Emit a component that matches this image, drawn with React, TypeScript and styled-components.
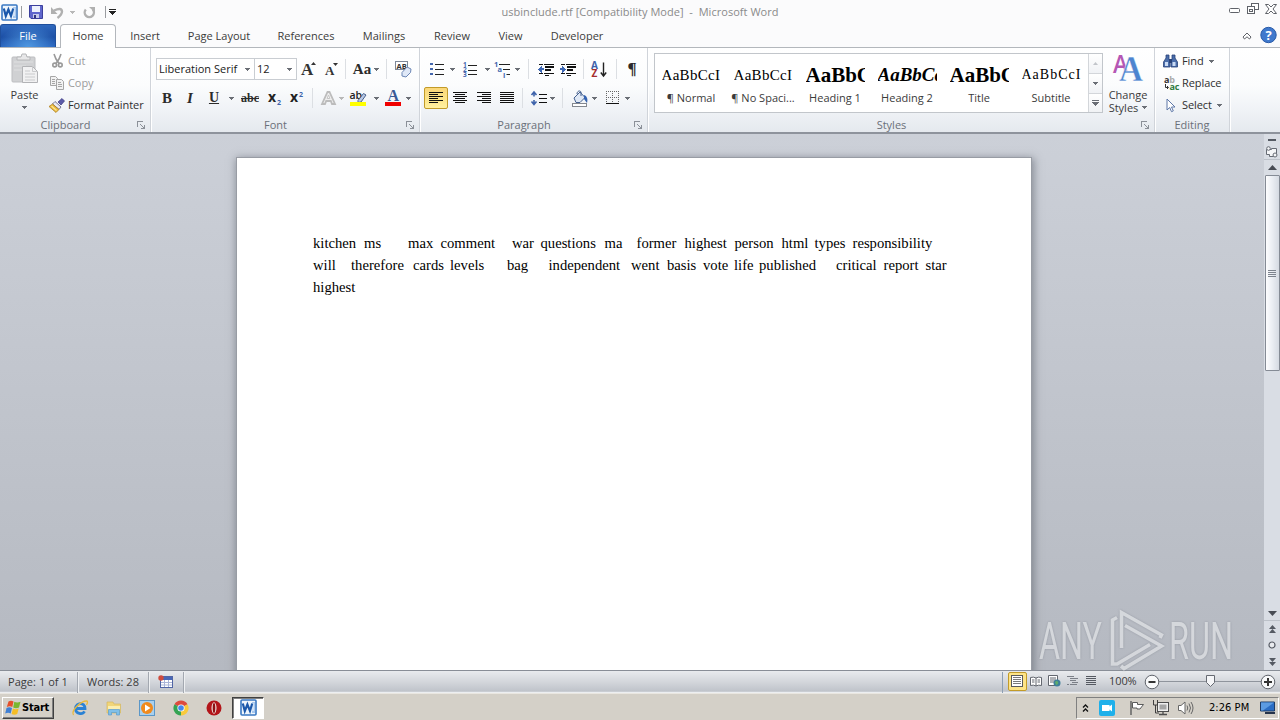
import React from "react";
import styled, { createGlobalStyle, css } from "styled-components";

const GlobalStyle = createGlobalStyle`
  * {
    box-sizing: border-box;
  }
  body {
    margin: 0;
    overflow: hidden;
  }
  svg {
    display: block;
    flex: none;
    overflow: visible;
  }
`;

const Window = styled.div`
  position: relative;
  display: flex;
  flex-direction: column;
  width: 1280px;
  height: 720px;
  overflow: hidden;
  font-family: "Open Sans", "Noto Sans", sans-serif;
  font-size: 11px;
  line-height: 14px;
  color: #3b3b3b;
  background-color: #fbfbfc;
  white-space: nowrap;
`;

/* title bar */
const TitleBar = styled.header`
  display: grid;
  grid-template-columns: 120px 1fr 120px;
  height: 24px;
`;
const QuickAccess = styled.div`
  display: flex;
  align-items: center;
  padding-left: 1px;
`;
const Title = styled.div`
  padding: 5px 0 0 0;
  text-align: center;
  color: #8a8a8a;
  white-space: pre;
  letter-spacing: 0.03px;
`;
const WindowButtons = styled.div`
  display: flex;
  justify-content: flex-end;
  gap: 6px;
  padding: 3px 3px 0 0;
`;

/* tabs */
const TabRow = styled.nav`
  display: flex;
  height: 24px;
  border-bottom: 1px solid #b3b7bc;
`;
const FileTab = styled.div`
  width: 56px;
  margin-right: 4px;
  padding-top: 4px;
  text-align: center;
  color: #fff;
  border: 1px solid #1f4f9c;
  border-bottom: none;
  border-radius: 3px 3px 0 0;
  background: radial-gradient(ellipse at 50% 100%, #4f97e0 0%, rgba(60, 125, 210, 0) 75%),
    linear-gradient(#2f68bd, #1d50a6 55%, #2a66c0);
`;
const Tab = styled.div<{ $width: number; $active?: boolean }>`
  width: ${(props) => props.$width}px;
  padding-top: 5px;
  text-align: center;
  ${(props) =>
    props.$active &&
    css`
      height: 24px;
      padding-top: 4px;
      border: 1px solid #b3b7bc;
      border-bottom: none;
      border-radius: 4px 4px 0 0;
      background-color: #fff;
    `}
`;
const TabTools = styled.div`
  display: flex;
  align-items: center;
  gap: 8px;
  margin-left: auto;
  padding-right: 3px;
`;

/* ribbon */
const Ribbon = styled.section`
  display: flex;
  height: 86px;
  background: linear-gradient(#ffffff 0%, #fbfcfd 45%, #eff2f6 75%, #e5e9ee 100%);
  border-bottom: 2px solid #8e939c;
`;
const Group = styled.div<{ $width: number }>`
  display: flex;
  flex-direction: column;
  width: ${(props) => props.$width}px;
  border-right: 1px solid #d0d4da;
  box-shadow: 1px 0 0 #fff;
`;
const GroupBody = styled.div`
  display: flex;
  height: 70px;
`;
const GroupFooter = styled.div`
  display: flex;
  align-items: center;
  height: 14px;
  color: #6b7079;
`;
const GroupLabel = styled.span`
  flex: 1;
  text-align: center;
`;
const LauncherCell = styled.div`
  display: flex;
  width: 19px;
  padding-left: 6px;
`;
const ToolRows = styled.div<{ $left?: number }>`
  display: flex;
  flex-direction: column;
  gap: 7px;
  padding: 10px 0 0 ${(props) => props.$left ?? 4}px;
`;
const ToolRow = styled.div`
  display: flex;
  height: 22px;
`;
const Cell = styled.div<{ $width: number; $pressed?: boolean }>`
  display: flex;
  align-items: center;
  justify-content: center;
  width: ${(props) => props.$width}px;
  height: 22px;
  ${(props) =>
    props.$pressed &&
    css`
      border: 1px solid #c29b29;
      border-radius: 2px;
      background: linear-gradient(#fbd779, #fde68c 60%, #fff0a0);
    `}
`;
const Divider = styled.i`
  width: 1px;
  height: 20px;
  background-color: #dcdfe3;
`;
const TitleDivider = styled.i`
  width: 1px;
  height: 12px;
  background-color: #9a9ca0;
`;
const Combo = styled.div<{ $width: number }>`
  display: flex;
  align-items: center;
  justify-content: space-between;
  width: ${(props) => props.$width}px;
  height: 22px;
  margin-right: -1px;
  padding: 0 4px 0 2px;
  color: #1a1a1a;
  border: 1px solid #c9cdd2;
  background-color: #fff;
`;
const Glyph = styled.span<{ $size: number; $bold?: boolean; $italic?: boolean; $line?: string }>`
  font-family: "Liberation Serif", serif;
  font-size: ${(props) => props.$size}px;
  font-weight: ${(props) => (props.$bold ? 700 : 400)};
  font-style: ${(props) => (props.$italic ? "italic" : "normal")};
  text-decoration: ${(props) => props.$line ?? "none"};
  color: #2b2b2b;
`;
const BigButton = styled.div<{ $width: number }>`
  display: flex;
  flex-direction: column;
  align-items: center;
  width: ${(props) => props.$width}px;
  padding-top: 5px;
`;
const BigLabel = styled.span<{ $gap?: number }>`
  display: flex;
  align-items: center;
  gap: 4px;
  height: 13px;
  margin-top: ${(props) => props.$gap ?? 0}px;
`;
const CommandList = styled.div`
  display: flex;
  flex-direction: column;
  padding-top: 2px;
`;
const Command = styled.div<{ $disabled?: boolean }>`
  display: grid;
  grid-template-columns: 19px auto auto;
  align-items: center;
  justify-content: start;
  height: 22px;
  letter-spacing: -0.08px;
  color: ${(props) => (props.$disabled ? "#9b9b9b" : "#2f2f2f")};
`;
const CommandText = styled.span`
  margin-right: 5px;
`;

/* style gallery */
const Gallery = styled.div`
  display: flex;
  width: 449px;
  height: 60px;
  margin: 5px 0 0 6px;
  border: 1px solid #c2c6cb;
  background-color: #fff;
`;
const StyleItem = styled.div`
  display: flex;
  flex-direction: column;
  align-items: center;
  width: 72px;
  padding-top: 10px;
`;
const Preview = styled.div<{ $size: number; $bold?: boolean; $italic?: boolean; $spacing?: number }>`
  width: 59px;
  height: 22px;
  overflow: hidden;
  font-family: "Liberation Serif", serif;
  font-size: ${(props) => props.$size}px;
  line-height: 22px;
  font-weight: ${(props) => (props.$bold ? 700 : 400)};
  font-style: ${(props) => (props.$italic ? "italic" : "normal")};
  letter-spacing: ${(props) => props.$spacing ?? 0}px;
  color: #000;
`;
const StyleName = styled.span`
  margin-top: 5px;
`;
const GalleryScroll = styled.div`
  display: flex;
  flex-direction: column;
  width: 14px;
  margin-left: auto;
`;
const GalleryButton = styled.div<{ $height: number }>`
  display: flex;
  align-items: center;
  justify-content: center;
  height: ${(props) => props.$height}px;
  border-left: 1px solid #d3d6da;
  border-bottom: 1px solid #d3d6da;
  background: linear-gradient(#fff, #f0f2f5);
  &:last-child {
    border-bottom: none;
  }
`;

/* document */
const Workspace = styled.main`
  display: flex;
  height: 536px;
`;
const Canvas = styled.div`
  flex: 1;
  padding: 24px 0 0 237px;
  overflow: hidden;
  background: linear-gradient(#ccd0d8, #b5b9c1);
`;
const Page = styled.article`
  width: 794px;
  height: 600px;
  padding: 74px 0 0 76px;
  background-color: #fff;
  box-shadow: 0 0 0 1px #989ca4, 1px 2px 8px 2px rgba(70, 75, 85, 0.5);
`;
const Line = styled.p`
  display: flex;
  height: 22px;
  margin: 0;
  font-family: "Liberation Serif", serif;
  font-size: 14.67px;
  line-height: 22px;
  color: #000;
`;
const Word = styled.span<{ $advance: number }>`
  width: ${(props) => props.$advance}px;
`;
const ScrollBar = styled.aside`
  display: flex;
  flex-direction: column;
  align-items: center;
  width: 16px;
  background: #d9dde4;
`;
const ScrollButton = styled.div<{ $height: number; $line?: boolean }>`
  display: flex;
  align-items: center;
  justify-content: center;
  width: 16px;
  height: ${(props) => props.$height}px;
  border-bottom: ${(props) => (props.$line ? "1px solid #bcc1c9" : "none")};
`;
const ScrollTrack = styled.div`
  flex: 1;
  padding-top: 1px;
`;
const ScrollThumb = styled.div`
  display: flex;
  align-items: center;
  justify-content: center;
  width: 15px;
  height: 196px;
  border: 1px solid #858b95;
  border-radius: 1px;
  background: linear-gradient(90deg, #fdfdfe, #eceff4 45%, #d5dae2);
`;

/* status bar */
const StatusBar = styled.footer`
  display: flex;
  align-items: center;
  height: 23px;
  border-top: 1px solid #898e97;
  background: linear-gradient(#e9ebee, #d3d6db 50%, #bfc3ca 92%, #eceef1 97%);
`;
const StatusItem = styled.div<{ $width: number; $left?: number }>`
  display: flex;
  align-items: center;
  width: ${(props) => props.$width}px;
  height: 21px;
  padding-left: ${(props) => props.$left ?? 8}px;
  padding-bottom: 1px;
  letter-spacing: 0.05px;
  border-right: 1px solid #a3a8b0;
  box-shadow: 1px 0 0 #eef0f2;
`;
const StatusRight = styled.div`
  display: flex;
  align-items: center;
  height: 21px;
  margin-left: auto;
  padding: 0 4px 2px 5px;
  border-left: 1px solid #8d9fb3;
`;
const ViewButton = styled.div<{ $active?: boolean }>`
  display: flex;
  align-items: center;
  justify-content: center;
  width: ${(props) => (props.$active ? 19 : 18.3)}px;
  height: 19px;
  border: 1px solid ${(props) => (props.$active ? "#c29b29" : "transparent")};
  border-radius: 2px;
  background: ${(props) => (props.$active ? "#fde487" : "none")};
`;
const Zoom = styled.span`
  width: 35px;
  margin-left: 9px;
  letter-spacing: -0.1px;
`;

/* windows taskbar */
const Taskbar = styled.footer`
  display: flex;
  align-items: center;
  height: 27px;
  padding: 1px 1px 0 2px;
  background-color: #d4d0c8;
  border-top: 1px solid #e9e6e0;
`;
const StartButton = styled.div`
  display: flex;
  align-items: center;
  width: 52px;
  height: 22px;
  padding-left: 2px;
  font-family: "DejaVu Sans Condensed", "DejaVu Sans", sans-serif;
  font-stretch: condensed;
  font-size: 11px;
  font-weight: 700;
  letter-spacing: -0.2px;
  color: #000;
  border: 1px solid;
  border-color: #fff #404040 #404040 #fff;
  box-shadow: inset -1px -1px 0 #808080;
`;
const Shortcuts = styled.div`
  display: flex;
  gap: 17.6px;
  margin-left: 18px;
`;
const TaskButton = styled.div`
  display: flex;
  align-items: center;
  justify-content: center;
  width: 32px;
  height: 22px;
  margin-left: 10px;
  background-color: #fff;
  border: 1px solid;
  border-color: #404040 #fff #fff #404040;
  box-shadow: inset 1px 1px 0 #808080;
`;
const Tray = styled.div`
  display: flex;
  align-items: center;
  width: 203px;
  height: 22px;
  margin-left: auto;
  padding-left: 5px;
  border: 1px solid;
  border-color: #808080 #fff #fff #808080;
`;
const TrayItem = styled.div<{ $width: number }>`
  display: flex;
  justify-content: center;
  width: ${(props) => props.$width}px;
`;
const Clock = styled.span`
  width: 54px;
  padding-left: 3px;
  font-family: "DejaVu Sans Condensed", "DejaVu Sans", sans-serif;
  font-stretch: condensed;
  font-size: 11px;
  letter-spacing: 0.05px;
  color: #000;
`;

const Watermark = styled.div`
  position: absolute;
  left: 1034px;
  top: 606px;
  opacity: 0.62;
  filter: drop-shadow(0 0 1px rgba(110, 115, 125, 0.7));
`;

const Arrow = ({ color = "#6a6e75" }: { color?: string }) => (
  <svg width="5" height="3" viewBox="0 0 5 3" shapeRendering="crispEdges">
    <path d="M0 0h5v1H4v1H3v1H2V2H1V1H0z" fill={color} />
  </svg>
);

const Launcher = () => (
  <LauncherCell>
    <svg width="8" height="8" viewBox="0 0 8 8" fill="none" stroke="#8b9098" shapeRendering="crispEdges">
      <path d="M.5 6V.5H6M3 3l4 4M7.5 3.5v4H3.5" />
    </svg>
  </LauncherCell>
);

const WordIcon = () => (
  <svg width="17" height="17" viewBox="0 0 17 17">
    <rect x="1" y="1" width="15" height="15" rx="1" fill="#eef5fc" stroke="#3a78c2" strokeWidth="1.6" />
    <path d="M12 3h3v11h-3z" fill="#a9c9ef" />
    <path d="M12 5h2M12 7h2M12 9h2M12 11h2" stroke="#fff" />
    <path d="M2.8 4.5l2 7.5 2.6-6.5L10 12l2.2-7.500" stroke="#1b58ab" strokeWidth="2.2" fill="none" />
  </svg>
);

const SaveIcon = () => (
  <svg width="14" height="14" viewBox="0 0 14 14">
    <path d="M.5.5h13v13H2L.5 12z" fill="#5f66cc" stroke="#3b3f9c" />
    <path d="M3 1h8v6H3z" fill="#edf1fc" />
    <path d="M4 9h6v4H4z" fill="#c6caea" />
    <path d="M5 10h2v3H5z" fill="#30347f" />
  </svg>
);

const UndoIcon = () => (
  <svg width="13" height="13" viewBox="0 0 13 13" fill="none" stroke="#b0b0b0" strokeWidth="2.4">
    <path d="M3 4.500q7.500-3.500 8 .8 0 3.500-4.500 6.700" />
    <path d="M0 1v7h6.500z" fill="#b0b0b0" stroke="none" />
  </svg>
);

const RedoIcon = () => (
  <svg width="13" height="13" viewBox="0 0 13 13" fill="none" stroke="#b0b0b0" strokeWidth="2.4">
    <path d="M2.800 3.500a4.600 4.600 0 1 0 7 0" />
    <path d="M6 1h6v5.500z" fill="#b0b0b0" stroke="none" />
  </svg>
);

const CustomizeIcon = ({ color = "#222" }: { color?: string }) => (
  <svg width="7" height="6" viewBox="0 0 7 6" shapeRendering="crispEdges">
    <path d="M0 0h7v1H0zM0 2h7v1H6v1H5v1H4v1H3V5H2V4H1V3H0z" fill={color} />
  </svg>
);

const PasteIcon = () => (
  <svg width="28" height="31" viewBox="0 0 28 31">
    <rect x="1" y="4" width="23" height="25" rx="1" fill="#d0d1d3" stroke="#bdbec1" />
    <path d="M3 9h19M3 13h12M3 17h9" stroke="#dfe0e1" />
    <path d="M6 7V4h4l1-3h4l1 3h3v3z" fill="#e7e7e8" stroke="#b6b7b9" />
    <path d="M11.5 13.5h10l5 5v11h-15z" fill="#f1f1f2" stroke="#b2b3b6" />
    <path d="M21.5 13.5v5h5M14 18h5M14 21h10M14 24h10M14 27h10" fill="none" stroke="#cacbcd" />
  </svg>
);

const CutIcon = () => (
  <svg width="11" height="14" viewBox="0 0 11 14" fill="none" stroke="#9a9a9a" strokeWidth="1.6">
    <path d="M2 0l2 5 3.5 5M9 0L7 5 3.500 10" />
    <circle cx="2.7" cy="11" r="1.900" />
    <circle cx="8.3" cy="11" r="1.900" />
  </svg>
);

const CopyIcon = () => (
  <svg width="16" height="14" viewBox="0 0 16 14" fill="#f2f2f2" stroke="#a6a6a6">
    <path d="M1.5.5h5l2 2v7h-7z" />
    <path d="M3 3.5h3M3 5.5h3M3 7.5h3" />
    <path d="M7.5 3.5h5l2 2v8h-7z" />
    <path d="M9 6.5h3M9 8.5h4M9 10.5h4" />
  </svg>
);

const BrushIcon = () => (
  <svg width="16" height="15" viewBox="0 0 16 15">
    <path d="M9 4l4-3.5L15.5 3 12 7z" fill="#5b5aa8" stroke="#36357c" strokeWidth=".7" />
    <path d="M6 3.5l6 5.5-2 2.5L3.500 6z" fill="#e9e9f2" stroke="#55577b" strokeWidth=".8" />
    <path d="M3.500 6l6.500 5.500-3 3L0 8.500z" fill="#e8b93a" stroke="#a8791c" strokeWidth=".7" />
    <path d="M2.500 8l5 4.500" stroke="#fbe596" strokeWidth="1.300" />
  </svg>
);

const ClearFormatIcon = () => (
  <svg width="17" height="18" viewBox="0 0 17 18">
    <rect x=".5" y="1.5" width="12" height="8" fill="#fff" stroke="#7d8697" />
    <text x="1.5" y="8.5" fontFamily="Open Sans, sans-serif" fontSize="7.5" fontWeight="700" fill="#333">
      AB
    </text>
    <path d="M7 12.500l5-5.500 4 2-.5 3.500-4.500 4.500-4-1z" fill="#dfe8f7" stroke="#6b86b5" />
  </svg>
);

const BulletsIcon = () => (
  <svg width="14" height="14" viewBox="0 0 14 14" shapeRendering="crispEdges">
    <path d="M0 1h3v2H0zM0 6h3v2H0zM0 11h3v2H0z" fill="#4467ad" />
    <path d="M5 2.500h9M5 7.500h9M5 12.500h9" stroke="#222" />
  </svg>
);

const NumberingIcon = () => (
  <svg width="14" height="15" viewBox="0 0 14 15">
    <g fontFamily="Open Sans, sans-serif" fontSize="6.500" fontWeight="700" fill="#4467ad">
      <text x="0" y="5">1</text>
      <text x="0" y="10">2</text>
      <text x="0" y="15">3</text>
    </g>
    <path d="M5 3.500h9M5 8.500h9M5 12.500h9" stroke="#222" />
  </svg>
);

const MultilevelIcon = () => (
  <svg width="17" height="15" viewBox="0 0 17 15">
    <g fontFamily="Open Sans, sans-serif" fontSize="7.500" fontWeight="700" fill="#4467ad">
      <text x="0" y="5">1</text>
      <text x="3.500" y="10">a</text>
      <text x="9" y="15.500">i</text>
    </g>
    <path d="M5 2.500h11M9 7.500h7M12.500 12.500H16" stroke="#222" />
  </svg>
);

const IndentIcon = ({ right }: { right?: boolean }) => (
  <svg width="16" height="13" viewBox="0 0 16 13" shapeRendering="crispEdges">
    <path d="M1 1.500h4M6 1.500h10M6 10.500h10M1 10.500h4M7 12.500h4" stroke="#111" />
    <path d="M7 4h9M7 7h6" stroke="#111" strokeWidth="2" />
    <path d={right ? "M0 5h2V3l4 3.500L2 10V7H0z" : "M6 5H4V3L0 6.500 4 10V7h2z"} fill="#3e68b5" />
  </svg>
);

const SortIcon = () => (
  <svg width="16" height="17" viewBox="0 0 16 17">
    <g fontFamily="Open Sans, sans-serif" fontSize="10" fontWeight="700">
      <text x="0" y="8" fill="#3e63ab">A</text>
      <text x=".5" y="16" fill="#a52c2c">Z</text>
    </g>
    <path d="M12.500 1.500v13M9.800 11.500l2.700 3.500 2.700-3.500" fill="none" stroke="#222" strokeWidth="1.400" />
  </svg>
);

const alignLines: Record<string, string> = {
  left: "M0 1h14M0 3h9M0 5h14M0 7h9M0 9h14M0 11h9",
  center: "M0 1h14M2 3h10M0 5h14M2 7h10M0 9h14M2 11h10",
  right: "M0 1h14M5 3h9M0 5h14M5 7h9M0 9h14M5 11h9",
  justify: "M0 1h14M0 3h14M0 5h14M0 7h14M0 9h14M0 11h14",
};

const AlignIcon = ({ kind }: { kind: string }) => (
  <svg width="14" height="12" viewBox="0 .5 14 12" shapeRendering="crispEdges">
    <path d={alignLines[kind]} stroke="#111" />
  </svg>
);

const SpacingIcon = () => (
  <svg width="16" height="17" viewBox="0 0 16 17">
    <path d="M3 2v4.500M3 10v4M.5 5L3 2l2.500 3M.5 11.500L3 14.500l2.500-3" stroke="#3e63ab" strokeWidth="1.600" fill="none" />
    <path d="M8 4.500h8M8 8.500h8M8 12.500h8" stroke="#111" />
  </svg>
);

const BucketIcon = () => (
  <svg width="18" height="17" viewBox="0 0 18 17">
    <path d="M3 8l6-6 5 5.500-5 5H5z" fill="#dfe8f5" stroke="#44608f" />
    <path d="M6 4c0-3 3-4 4-2v4" fill="none" stroke="#44608f" />
    <path d="M13 5c3 1 4 4 3 8l-3-4z" fill="#3463b2" />
    <rect x="1.500" y="13.500" width="14" height="3" fill="#fff" stroke="#84888f" />
  </svg>
);

const BordersIcon = () => (
  <svg width="13" height="14" viewBox="0 0 13 14" shapeRendering="crispEdges">
    <path d="M0 .5h13M0 6.500h13M.5 0v12M6.500 0v12M12.500 0v12" stroke="#666" strokeDasharray="1 1" />
    <path d="M0 12.500h13" stroke="#111" />
  </svg>
);

const OutlineAIcon = () => (
  <svg width="17" height="16" viewBox="0 0 17 16">
    <path d="M2 14L7.500 2h2L15 14h-3l-1.200-3H6.200L5 14z" fill="#eee" stroke="#bcbcbc" strokeWidth="1.800" />
    <path d="M7.200 8.500h2.600L8.500 5z" fill="#fff" stroke="#c4c4c4" />
  </svg>
);

const HighlightIcon = () => (
  <svg width="17" height="17" viewBox="0 0 17 17">
    <text x="-.5" y="9" fontFamily="Open Sans, sans-serif" fontSize="10.500" fontWeight="600" fill="#222">
      ab
    </text>
    <path d="M8 10.500l5.500-7 2.500 1.500-5 7-3 .5z" fill="#b9c9e6" stroke="#47608c" />
    <rect x="0" y="12" width="16" height="4" fill="#ffff00" />
  </svg>
);

const FontColorIcon = () => (
  <svg width="16" height="17" viewBox="0 0 16 17">
    <text x="2.500" y="11" fontFamily="Liberation Serif, serif" fontSize="16" fontWeight="700" fill="#3a5a96">
      A
    </text>
    <rect x="0" y="12" width="16" height="4" fill="#f00000" />
  </svg>
);

const GrowIcon = ({ shrink }: { shrink?: boolean }) => (
  <svg width="15" height="18" viewBox="0 0 15 18">
    <text x={shrink ? 1 : 0} y="15" fontFamily="Liberation Serif, serif" fontSize={shrink ? 13 : 17} fontWeight="700" fill="#333">
      A
    </text>
    <path d={shrink ? "M9 3h5l-2.5 3z" : "M10 5h5l-2.5-3z"} fill="#333" />
  </svg>
);

const ChangeStylesIcon = () => (
  <svg width="30" height="29" viewBox="0 0 30 29">
    <text x="0" y="20" fontFamily="Open Sans, sans-serif" fontWeight="600" fontSize="25" textLength="15" lengthAdjust="spacingAndGlyphs" fill="#b557b4">
      A
    </text>
    <text x="6" y="28" fontFamily="Liberation Serif, serif" fontWeight="700" fontSize="36" textLength="24" lengthAdjust="spacingAndGlyphs" fill="#4d84cf" stroke="#fff" strokeWidth=".4">
      A
    </text>
  </svg>
);

const FindIcon = () => (
  <svg width="15" height="14" viewBox="0 0 15 14">
    <path d="M3 1h3v4l1 3v5H.5V8L3 4zM9 1h3v3l2.5 4v5H8V8l1-3z" fill="#4a6daa" stroke="#2a4378" strokeWidth=".8" />
    <path d="M6 5h3v4H6z" fill="#2a4378" />
    <path d="M2 8h3v4H2zM9.500 8h3v4h-3z" fill="#c9daf3" />
  </svg>
);

const ReplaceIcon = () => (
  <svg width="17" height="16" viewBox="0 0 17 16">
    <g fontFamily="Open Sans, sans-serif" fontSize="9" fontWeight="700">
      <text x="1" y="7.500" fill="#333">
        a<tspan fill="#aaa">b</tspan>
      </text>
      <text x="6.500" y="15" fill="#2f7a3c">ac</text>
    </g>
    <path d="M2.500 9v3.500H5M4 11l1.500 1.500L4 14" fill="none" stroke="#333" />
  </svg>
);

const SelectIcon = () => (
  <svg width="12" height="15" viewBox="0 0 12 15">
    <path d="M2 1v11l2.700-2.500 1.800 4.200 1.800-.8L6.500 9H10z" fill="#fff" stroke="#5d77a8" />
  </svg>
);

const WindowsLogo = () => (
  <svg width="17" height="15" viewBox="0 0 17 15">
    <path d="M3.500 1.500q2.500-1.500 5 0L7.300 7q-2.500-1.500-5.500 0z" fill="#e5502a" />
    <path d="M9.300 1.800q2.700 1.500 6.200 0L14 7.500q-3 1.500-5.800 0z" fill="#7ab72f" />
    <path d="M1.500 8q2.700-1.500 5.500 0l-1.300 5.500q-2.500-1.500-5.500 0z" fill="#3f7fd4" />
    <path d="M7.900 8.500q2.800 1.500 5.800 0L12.200 14q-2.800 1.500-5.600 0z" fill="#f5bd26" />
  </svg>
);

const IeIcon = () => (
  <svg width="16" height="16" viewBox="0 0 16 16" fill="none">
    <path d="M3.500 8.500h9.500c0-6.500-9-6.500-9.500 0 0 5.500 7 6.500 9 2.800" stroke="#2b82d4" strokeWidth="2.800" />
    <path d="M1.500 15C-1.500 11 9 .5 15 1c1.200 1 .3 2.500-.5 4" stroke="#e9b93c" strokeWidth="1.300" />
  </svg>
);

const ExplorerIcon = () => (
  <svg width="16" height="16" viewBox="0 0 16 16">
    <path d="M1 2h6l1 2h6.500v9H1z" fill="#f0d579" stroke="#d5b75e" strokeWidth=".7" />
    <path d="M2 6h12v4H2z" fill="#fbeeb0" />
    <path d="M2.500 15V9.500h11V15h-3v-2.500h-5V15z" fill="#7fbfe9" stroke="#5b9ccb" strokeWidth=".7" />
  </svg>
);

const PlayerIcon = () => (
  <svg width="16" height="16" viewBox="0 0 16 16">
    <rect x=".5" y=".5" width="15" height="15" fill="#a9d0ee" stroke="#5b97c8" />
    <circle cx="8" cy="8" r="6" fill="#f08a1d" />
    <path d="M6 4.500L11.500 8 6 11.500z" fill="#fff" />
  </svg>
);

const ChromeIcon = () => (
  <svg width="16" height="16" viewBox="0 0 16 16">
    <path d="M8 8L1.500 4.200A7.500 7.500 0 0 1 14.500 4.200z" fill="#dd4b3e" />
    <path d="M8 8L1.500 4.200A7.500 7.500 0 0 0 8 15.500z" fill="#34a353" />
    <path d="M8 8L14.500 4.200A7.500 7.500 0 0 1 8 15.500z" fill="#f8ca3d" />
    <circle cx="8" cy="8" r="3.600" fill="#fff" />
    <circle cx="8" cy="8" r="2.800" fill="#4687ed" />
  </svg>
);

const OperaIcon = () => (
  <svg width="16" height="16" viewBox="0 0 16 16">
    <circle cx="8" cy="8" r="7.500" fill="#b3151a" />
    <ellipse cx="8" cy="8" rx="2.500" ry="5.800" fill="#f2e4e0" />
    <ellipse cx="8" cy="8" rx="1.300" ry="5" fill="#8e1013" />
  </svg>
);

const CameraIcon = () => (
  <svg width="16" height="16" viewBox="0 0 16 16">
    <rect width="16" height="16" rx="2" fill="#1fb0ea" />
    <path d="M3 5h7.500v1.500L13 4.500v7L10.500 9.500V11H3z" fill="#fff" />
  </svg>
);

const FlagIcon = () => (
  <svg width="16" height="16" viewBox="0 0 16 16">
    <path d="M2 1v14" stroke="#6b6b6b" strokeWidth="1.600" />
    <path d="M3.500 2.500h5v2h6l-2 2.500-1.500 2H8V8H3.500z" fill="#fff" stroke="#5b5b5b" />
  </svg>
);

const NetworkIcon = () => (
  <svg width="16" height="16" viewBox="0 0 16 16">
    <rect x="4.500" y="2.500" width="11" height="9" fill="#eee" stroke="#4d4d4d" />
    <rect x="6.500" y="4.500" width="7" height="5" fill="#a5a5a5" />
    <path d="M6 14.500h8M10 12v2" stroke="#4d4d4d" strokeWidth="1.300" />
    <path d="M.5 0v5h4V0M2.500 5v8H6" fill="none" stroke="#3f3f3f" />
  </svg>
);

const VolumeIcon = () => (
  <svg width="17" height="16" viewBox="0 0 17 16" fill="none" stroke="#666">
    <path d="M1.500 5.500H4L8 2v12l-4-3.500H1.500z" fill="#fff" />
    <path d="M10 5.500q1.500 2.500 0 5M12 3.500q3 4.500 0 9M14 2q4 6 0 12" />
  </svg>
);

const DesktopIcon = () => (
  <svg width="16" height="15" viewBox="0 0 16 15">
    <path d="M.5 2h14v9H.5z" fill="#2b6dc4" stroke="#1f3c66" />
    <path d="M1 2.500h13L3 10.500H1z" fill="#5c9be2" />
    <path d="M5 13h10" stroke="#26344b" strokeWidth="2" />
  </svg>
);

const tabs = [
  { name: "Home", width: 56 },
  { name: "Insert", width: 58 },
  { name: "Page Layout", width: 90 },
  { name: "References", width: 84 },
  { name: "Mailings", width: 72 },
  { name: "Review", width: 64 },
  { name: "View", width: 53 },
  { name: "Developer", width: 80 },
];

const styles = [
  { name: "¶ Normal", sample: "AaBbCcI", size: 15, spacing: 0.3 },
  { name: "¶ No Spaci...", sample: "AaBbCcI", size: 15, spacing: 0.3 },
  { name: "Heading 1", sample: "AaBbC", size: 21, bold: true },
  { name: "Heading 2", sample: "AaBbCc", size: 19, bold: true, italic: true },
  { name: "Title", sample: "AaBbC", size: 21, bold: true },
  { name: "Subtitle", sample: "AaBbCcI", size: 14, spacing: 1 },
];

// each word carries the distance to the start of the next one
const lines: [string, number][][] = [
  [
    ["kitchen", 51],
    ["ms", 44],
    ["max", 32.5],
    ["comment", 71.5],
    ["war", 28.5],
    ["questions", 64],
    ["ma", 32],
    ["former", 48],
    ["highest", 50],
    ["person", 47],
    ["html", 33],
    ["types", 38],
    ["responsibility", 90],
  ],
  [
    ["will", 38],
    ["therefore", 62],
    ["cards", 37],
    ["levels", 57],
    ["bag", 41.5],
    ["independent", 82.5],
    ["went", 36],
    ["basis", 36],
    ["vote", 31],
    ["life", 25],
    ["published", 77],
    ["critical", 47.5],
    ["report", 42],
    ["star", 30],
  ],
  [["highest", 50]],
];

function App() {
  return (
    <Window>
      <GlobalStyle />
      <TitleBar>
        <QuickAccess>
          <WordIcon />
          <Cell $width={7}>
            <TitleDivider />
          </Cell>
          <Cell $width={21}>
            <SaveIcon />
          </Cell>
          <Cell $width={23}>
            <UndoIcon />
          </Cell>
          <Cell $width={7}>
            <Arrow color="#b8b8b8" />
          </Cell>
          <Cell $width={27}>
            <RedoIcon />
          </Cell>
          <Cell $width={5}>
            <TitleDivider />
          </Cell>
          <Cell $width={9}>
            <CustomizeIcon />
          </Cell>
        </QuickAccess>
        <Title>{"usbinclude.rtf [Compatibility Mode]  -  Microsoft Word"}</Title>
        <WindowButtons>
          <svg width="12" height="12" viewBox="0 0 12 12">
            <rect x=".5" y="5.500" width="10" height="4" rx="1" fill="#fff" stroke="#5f6269" />
          </svg>
          <svg width="12" height="12" viewBox="0 0 12 12" fill="#fff" stroke="#5f6269">
            <rect x="4.500" y=".5" width="7" height="6" />
            <rect x=".5" y="3.500" width="7" height="7" />
            <rect x="2.500" y="6.500" width="3" height="2" />
          </svg>
          <svg width="12" height="12" viewBox="0 0 12 12">
            <path d="M.5 1.500h3L6 4l2.500-2.500h3L8 6l3.500 4.500h-3L6 8l-2.500 2.500h-3L4 6z" fill="#fff" stroke="#5f6269" />
          </svg>
        </WindowButtons>
      </TitleBar>
      <TabRow>
        <FileTab>File</FileTab>
        {tabs.map((tab, index) => (
          <Tab key={tab.name} $width={tab.width} $active={index === 0}>
            {tab.name}
          </Tab>
        ))}
        <TabTools>
          <svg width="10" height="8" viewBox="0 0 10 8">
            <path d="M1 5l4-4 4 4-1.500 2L5 4.800 2.500 7z" fill="#fff" stroke="#5f6269" />
          </svg>
          <svg width="17" height="17" viewBox="0 0 17 17">
            <circle cx="8.500" cy="8" r="7.700" fill="#4079cd" stroke="#2a5ba8" />
            <text x="8.500" y="12.500" textAnchor="middle" fontFamily="Open Sans, sans-serif" fontSize="13" fontWeight="700" fill="#fff">
              ?
            </text>
          </svg>
        </TabTools>
      </TabRow>

      <Ribbon>
        <Group $width={151}>
          <GroupBody>
            <BigButton $width={49}>
              <PasteIcon />
              <BigLabel $gap={4}>Paste</BigLabel>
              <BigLabel>
                <Arrow />
              </BigLabel>
            </BigButton>
            <CommandList>
              <Command $disabled>
                <Cell $width={16}>
                  <CutIcon />
                </Cell>
                Cut
              </Command>
              <Command $disabled>
                <CopyIcon />
                Copy
              </Command>
              <Command>
                <BrushIcon />
                Format Painter
              </Command>
            </CommandList>
          </GroupBody>
          <GroupFooter>
            <GroupLabel>Clipboard</GroupLabel>
            <Launcher />
          </GroupFooter>
        </Group>

        <Group $width={269}>
          <GroupBody>
            <ToolRows $left={5}>
              <ToolRow>
                <Combo $width={99}>
                  Liberation Serif <Arrow />
                </Combo>
                <Combo $width={43}>
                  12 <Arrow />
                </Combo>
                <Cell $width={25}>
                  <GrowIcon />
                </Cell>
                <Cell $width={20}>
                  <GrowIcon shrink />
                </Cell>
                <Cell $width={9}>
                  <Divider />
                </Cell>
                <Cell $width={24}>
                  <Glyph $size={15} $bold>
                    Aa
                  </Glyph>
                </Cell>
                <Cell $width={4}>
                  <Arrow />
                </Cell>
                <Cell $width={16}>
                  <Divider />
                </Cell>
                <Cell $width={18}>
                  <ClearFormatIcon />
                </Cell>
              </ToolRow>
              <ToolRow>
                <Cell $width={22}>
                  <Glyph $size={15} $bold>
                    B
                  </Glyph>
                </Cell>
                <Cell $width={24}>
                  <Glyph $size={15} $bold $italic>
                    I
                  </Glyph>
                </Cell>
                <Cell $width={24}>
                  <Glyph $size={14} $bold $line="underline">
                    U
                  </Glyph>
                </Cell>
                <Cell $width={10}>
                  <Arrow />
                </Cell>
                <Cell $width={28}>
                  <Glyph $size={12} $bold $line="line-through">
                    abc
                  </Glyph>
                </Cell>
                <Cell $width={20}>
                  <svg width="13" height="14" viewBox="0 0 13 14" fontFamily="Open Sans, sans-serif" fontWeight="700">
                    <text x="0" y="11" fontSize="14" fill="#222">x</text>
                    <text x="9" y="14" fontSize="7" fill="#3e63ab">2</text>
                  </svg>
                </Cell>
                <Cell $width={24}>
                  <svg width="13" height="14" viewBox="0 0 13 14" fontFamily="Open Sans, sans-serif" fontWeight="700">
                    <text x="0" y="11" fontSize="14" fill="#222">x</text>
                    <text x="9" y="6" fontSize="7" fill="#3e63ab">2</text>
                  </svg>
                </Cell>
                <Cell $width={9}>
                  <Divider />
                </Cell>
                <Cell $width={22}>
                  <OutlineAIcon />
                </Cell>
                <Cell $width={5}>
                  <Arrow color="#b8b8b8" />
                </Cell>
                <Cell $width={29}>
                  <HighlightIcon />
                </Cell>
                <Cell $width={6}>
                  <Arrow />
                </Cell>
                <Cell $width={27}>
                  <FontColorIcon />
                </Cell>
                <Cell $width={5}>
                  <Arrow />
                </Cell>
              </ToolRow>
            </ToolRows>
          </GroupBody>
          <GroupFooter>
            <GroupLabel>Font</GroupLabel>
            <Launcher />
          </GroupFooter>
        </Group>

        <Group $width={228}>
          <GroupBody>
            <ToolRows>
              <ToolRow>
                <Cell $width={26}>
                  <BulletsIcon />
                </Cell>
                <Cell $width={5}>
                  <Arrow />
                </Cell>
                <Cell $width={30}>
                  <NumberingIcon />
                </Cell>
                <Cell $width={5}>
                  <Arrow />
                </Cell>
                <Cell $width={25}>
                  <MultilevelIcon />
                </Cell>
                <Cell $width={5}>
                  <Arrow />
                </Cell>
                <Cell $width={16}>
                  <Divider />
                </Cell>
                <Cell $width={20}>
                  <IndentIcon />
                </Cell>
                <Cell $width={24}>
                  <IndentIcon right />
                </Cell>
                <Cell $width={7}>
                  <Divider />
                </Cell>
                <Cell $width={23}>
                  <SortIcon />
                </Cell>
                <Cell $width={12}>
                  <Divider />
                </Cell>
                <Cell $width={20}>
                  <Glyph $size={17} $bold>
                    ¶
                  </Glyph>
                </Cell>
              </ToolRow>
              <ToolRow>
                <Cell $width={24} $pressed>
                  <AlignIcon kind="left" />
                </Cell>
                <Cell $width={24}>
                  <AlignIcon kind="center" />
                </Cell>
                <Cell $width={24}>
                  <AlignIcon kind="right" />
                </Cell>
                <Cell $width={22}>
                  <AlignIcon kind="justify" />
                </Cell>
                <Cell $width={9}>
                  <Divider />
                </Cell>
                <Cell $width={23}>
                  <SpacingIcon />
                </Cell>
                <Cell $width={4}>
                  <Arrow />
                </Cell>
                <Cell $width={16}>
                  <Divider />
                </Cell>
                <Cell $width={20}>
                  <BucketIcon />
                </Cell>
                <Cell $width={9}>
                  <Arrow />
                </Cell>
                <Cell $width={26}>
                  <BordersIcon />
                </Cell>
                <Cell $width={5}>
                  <Arrow />
                </Cell>
              </ToolRow>
            </ToolRows>
          </GroupBody>
          <GroupFooter>
            <GroupLabel>Paragraph</GroupLabel>
            <Launcher />
          </GroupFooter>
        </Group>

        <Group $width={507}>
          <GroupBody>
            <Gallery>
              {styles.map((item) => (
                <StyleItem key={item.name}>
                  <Preview $size={item.size} $bold={item.bold} $italic={item.italic} $spacing={item.spacing}>
                    {item.sample}
                  </Preview>
                  <StyleName>{item.name}</StyleName>
                </StyleItem>
              ))}
              <GalleryScroll>
                <GalleryButton $height={20}>
                  <svg width="5" height="3" viewBox="0 0 5 3">
                    <path d="M0 3h5L2.500 0z" fill="#c2c5ca" />
                  </svg>
                </GalleryButton>
                <GalleryButton $height={20}>
                  <Arrow />
                </GalleryButton>
                <GalleryButton $height={18}>
                  <CustomizeIcon color="#6a6e75" />
                </GalleryButton>
              </GalleryScroll>
            </Gallery>
            <BigButton $width={50}>
              <ChangeStylesIcon />
              <BigLabel $gap={6}>Change</BigLabel>
              <BigLabel>
                Styles <Arrow />
              </BigLabel>
            </BigButton>
          </GroupBody>
          <GroupFooter>
            <GroupLabel>Styles</GroupLabel>
            <Launcher />
          </GroupFooter>
        </Group>

        <Group $width={75}>
          <GroupBody>
            <Cell $width={8} />
            <CommandList>
              <Command>
                <FindIcon />
                <CommandText>Find</CommandText>
                <Arrow />
              </Command>
              <Command>
                <ReplaceIcon />
                Replace
              </Command>
              <Command>
                <Cell $width={15}>
                  <SelectIcon />
                </Cell>
                <CommandText>Select</CommandText>
                <Arrow />
              </Command>
            </CommandList>
          </GroupBody>
          <GroupFooter>
            <GroupLabel>Editing</GroupLabel>
          </GroupFooter>
        </Group>
      </Ribbon>

      <Workspace>
        <Canvas>
          <Page>
            {lines.map((words, index) => (
              <Line key={index}>
                {words.map(([text, advance]) => (
                  <Word key={text} $advance={advance}>
                    {text}
                  </Word>
                ))}
              </Line>
            ))}
          </Page>
        </Canvas>
        <ScrollBar>
          <ScrollButton $height={11}>
            <svg width="8" height="2" viewBox="0 0 8 2">
              <path d="M0 1h8" stroke="#555a63" strokeWidth="2" />
            </svg>
          </ScrollButton>
          <ScrollButton $height={15} $line>
            <svg width="12" height="12" viewBox="0 0 12 12" fill="#f5f6f8" stroke="#666b74">
              <path d="M.5 3.500h5v-1h5v7h-3v1h-4v-2h-3z" />
              <circle cx="2.500" cy="2.500" r="1.800" />
              <circle cx="9" cy="9" r="2" />
            </svg>
          </ScrollButton>
          <ScrollButton $height={14}>
            <svg width="9" height="5" viewBox="0 0 9 5">
              <path d="M0 5h9L4.500 0z" fill="#484c54" />
            </svg>
          </ScrollButton>
          <ScrollTrack>
            <ScrollThumb>
              <svg width="8" height="7" viewBox="0 0 8 7" shapeRendering="crispEdges">
                <path d="M0 .5h8M0 2.500h8M0 4.500h8M0 6.500h8" stroke="#7d838d" />
              </svg>
            </ScrollThumb>
          </ScrollTrack>
          <ScrollButton $height={14} $line>
            <svg width="9" height="5" viewBox="0 0 9 5">
              <path d="M0 0h9L4.500 5z" fill="#484c54" />
            </svg>
          </ScrollButton>
          <ScrollButton $height={16}>
            <svg width="7" height="8" viewBox="0 0 7 8">
              <path d="M0 4h7L3.500 0zM0 8h7L3.500 4z" fill="#555a63" />
            </svg>
          </ScrollButton>
          <ScrollButton $height={16}>
            <svg width="8" height="8" viewBox="0 0 8 8">
              <circle cx="4" cy="4" r="3" fill="#e9ebef" stroke="#555a63" strokeWidth="1.200" />
            </svg>
          </ScrollButton>
          <ScrollButton $height={17}>
            <svg width="7" height="8" viewBox="0 0 7 8">
              <path d="M0 0h7L3.500 4zM0 4h7L3.500 8z" fill="#555a63" />
            </svg>
          </ScrollButton>
        </ScrollBar>
      </Workspace>

      <StatusBar>
        <StatusItem $width={78}>Page: 1 of 1</StatusItem>
        <StatusItem $width={71} $left={9}>
          Words: 28
        </StatusItem>
        <StatusItem $width={35} $left={9}>
          <svg width="16" height="14" viewBox="0 0 16 14">
            <rect x="2.500" y="1.500" width="12" height="11" fill="#fff" stroke="#5165a5" />
            <path d="M3 2h11v3H3z" fill="#4867b7" />
            <path d="M3 7.500h11M3 10h11M6.500 5v7M10.500 5v7" stroke="#aab5d8" />
            <circle cx="3" cy="3" r="2.700" fill="#cf4b3d" />
          </svg>
        </StatusItem>
        <StatusRight>
          <ViewButton $active>
            <svg width="12" height="12" viewBox="0 0 12 12" shapeRendering="crispEdges">
              <rect x=".5" y=".5" width="11" height="11" fill="#fff" stroke="#5a5a5a" />
              <path d="M2 2.500h8M2 4.500h8M2 6.500h8M2 8.500h8" stroke="#7a7a7a" />
            </svg>
          </ViewButton>
          <ViewButton>
            <svg width="12" height="11" viewBox="0 0 12 11" fill="#fff" stroke="#63676f">
              <path d="M.5 1.500q3-1 5.500.5 2.500-1.500 5.500-.5v8q-3-1-5.500.5-2.500-1.500-5.500-.5zM6 2v8M2 4h2.500M2 6h2.500M7.500 4H10M7.500 6H10" />
            </svg>
          </ViewButton>
          <ViewButton>
            <svg width="13" height="12" viewBox="0 0 13 12">
              <path d="M.5.5h9v10h-9zM2 3h6M2 5h6M2 7h4" fill="#fff" stroke="#63676f" />
              <circle cx="9" cy="8" r="3.500" fill="#3f7f9a" />
              <path d="M7 7q2-2 3 0t-2 3z" fill="#5fae6b" />
            </svg>
          </ViewButton>
          <ViewButton>
            <svg width="11" height="10" viewBox="0 0 11 10" shapeRendering="crispEdges">
              <path d="M0 .5h7M3 2.500h8M3 4.500h6M5 6.500h6M0 8.500h2M3 8.500h7" stroke="#7b7f87" />
            </svg>
          </ViewButton>
          <ViewButton>
            <svg width="10" height="10" viewBox="0 0 10 10" shapeRendering="crispEdges">
              <path d="M0 .5h10M0 2.500h10M0 4.500h10M0 6.500h10M0 8.500h10" stroke="#555961" />
            </svg>
          </ViewButton>
          <Zoom>100%</Zoom>
          <svg width="132" height="17" viewBox="0 0 132 17">
            <path d="M15 8.500h102" stroke="#8f949c" />
            <path d="M66.500 5v7" stroke="#8f949c" />
            <circle cx="8" cy="9" r="6.800" fill="#f8f9fa" stroke="#5f636b" />
            <path d="M4.500 9h7" stroke="#333" strokeWidth="2" />
            <path d="M62.500 2.500h8v7l-4 4-4-4z" fill="#f5f6f8" stroke="#666a72" />
            <circle cx="124" cy="9" r="6.800" fill="#f8f9fa" stroke="#5f636b" />
            <path d="M120 9h8M124 5v8" stroke="#333" strokeWidth="2" />
          </svg>
        </StatusRight>
      </StatusBar>

      <Taskbar>
        <StartButton>
          <WindowsLogo />
          Start
        </StartButton>
        <Shortcuts>
          <IeIcon />
          <ExplorerIcon />
          <PlayerIcon />
          <ChromeIcon />
          <OperaIcon />
        </Shortcuts>
        <TaskButton>
          <WordIcon />
        </TaskButton>
        <Tray>
          <TrayItem $width={7}>
            <svg width="7" height="8" viewBox="0 0 7 8" fill="none" stroke="#111" strokeWidth="1.300">
              <path d="M1 3.500L3.500 1 6 3.500M1 7.500L3.500 5 6 7.500" />
            </svg>
          </TrayItem>
          <TrayItem $width={36}>
            <CameraIcon />
          </TrayItem>
          <TrayItem $width={24}>
            <FlagIcon />
          </TrayItem>
          <TrayItem $width={24}>
            <NetworkIcon />
          </TrayItem>
          <TrayItem $width={25}>
            <VolumeIcon />
          </TrayItem>
          <TrayItem $width={8} />
          <Clock>2:26 PM</Clock>
          <DesktopIcon />
        </Tray>
      </Taskbar>

      <Watermark>
        <svg width="204" height="68" viewBox="0 0 204 68">
          <g fontFamily="Roboto, sans-serif" fontSize="52" fill="#e8eaec">
            <text x="5" y="53" textLength="63" lengthAdjust="spacingAndGlyphs">
              ANY
            </text>
            <text x="135" y="53" textLength="64" lengthAdjust="spacingAndGlyphs">
              RUN
            </text>
          </g>
          <g fill="none" stroke="#e8eaec" strokeWidth="3.600">
            <path d="M87.500 42V6.500L127.500 29l-1.500 3" />
            <path d="M83 11.500L78.500 14v44H83l33-19.500" />
            <path d="M91 19.500L127.500 40 90 62.500l-3-2.500" />
          </g>
        </svg>
      </Watermark>
    </Window>
  );
}

export default App;
